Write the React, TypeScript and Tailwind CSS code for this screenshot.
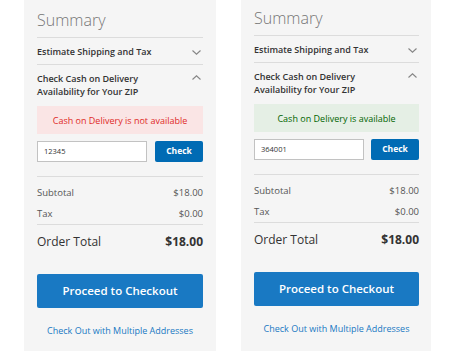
import React from "react";

function Chevron({ up }: { up?: boolean }) {
  return (
    <svg width="9" height="5" viewBox="0 0 9 5" className="shrink-0">
      <path
        d={up ? "M0.5 4.5 L4.5 0.8 L8.5 4.5" : "M0.5 0.5 L4.5 4.2 L8.5 0.5"}
        fill="none"
        stroke="#858585"
        strokeWidth="1.1"
      />
    </svg>
  );
}

function Panel({
  ok,
  zip,
  msg,
  box,
}: {
  ok: boolean;
  zip: string;
  msg: string;
  box: string;
}) {
  return (
    <div className={`bg-[#f5f5f5] ${box}`}>
      <div className="h-[37px] flex items-center text-[16px] font-light text-[#757575] leading-none pt-[2px]">
        Summary
      </div>
      <div className="border-t border-[#dcdcdc] h-[27px] pt-[2px] flex items-center justify-between pr-[2px]">
        <span className="text-[9px] font-semibold text-[#333]">Estimate Shipping and Tax</span>
        <Chevron />
      </div>
      <div className="border-t border-[#dcdcdc] pt-[7px] flex justify-between pr-[2px]">
        <span className="text-[9px] font-semibold text-[#333] leading-[13px]">
          Check Cash on Delivery
          <br />
          Availability for Your ZIP
        </span>
        <div className="pt-[3px]">
          <Chevron up />
        </div>
      </div>
      <div
        className={`mt-[8px] h-[28px] pt-[1px] flex items-center justify-center text-[9px] ${
          ok ? "bg-[#e5efe5] text-[#006400]" : "bg-[#fae5e5] text-[#e02b27]"
        }`}
      >
        {msg}
      </div>
      <div className="mt-[7px] flex items-center justify-between">
        <div className="w-[110px] h-[21px] bg-white border border-[#c2c2c2] flex items-center px-[6px] text-[7.5px] text-[#333]">
          {zip}
        </div>
        <button className="w-[48px] h-[21px] bg-[#006bb4] rounded-[2px] text-white text-[8.5px] font-bold leading-none">
          Check
        </button>
      </div>
      <div className="mt-[14px] border-t border-[#dcdcdc] pt-[6px]">
        <div className="h-[21px] flex items-center justify-between text-[9.5px] text-[#555]">
          <span>Subtotal</span>
          <span>$18.00</span>
        </div>
        <div className="h-[20px] flex items-center justify-between text-[9.5px] text-[#555]">
          <span>Tax</span>
          <span>$0.00</span>
        </div>
      </div>
      <div className="border-t border-[#dcdcdc] h-[33px] pt-[2px] flex items-center justify-between text-[#333]">
        <span className="text-[12px]">Order Total</span>
        <span className="text-[12px] font-bold">$18.00</span>
      </div>
      <button className="mt-[17px] w-full h-[34px] bg-[#1979c3] rounded-[2px] text-white text-[11.5px] font-semibold">
        Proceed to Checkout
      </button>
      <div className="mt-[17px] leading-[12px] text-center text-[9px] text-[#1979c3] pb-[40px]">
        Check Out with Multiple Addresses
      </div>
    </div>
  );
}

export default function App() {
  return (
    <div
      className="w-[456px] h-[351px] overflow-hidden bg-white flex items-start"
      style={{ fontFamily: '"Open Sans", sans-serif' }}
    >
      <div className="ml-[24px]">
        <Panel
          ok={false}
          zip="12345"
          msg="Cash on Delivery is not available"
          box="w-[192px] pl-[13px] pr-[13px]"
        />
      </div>
      <div className="ml-[25px] -mt-[2px]">
        <Panel
          ok={true}
          zip="364001"
          msg="Cash on Delivery is available"
          box="w-[190px] pl-[13px] pr-[12px]"
        />
      </div>
    </div>
  );
}
